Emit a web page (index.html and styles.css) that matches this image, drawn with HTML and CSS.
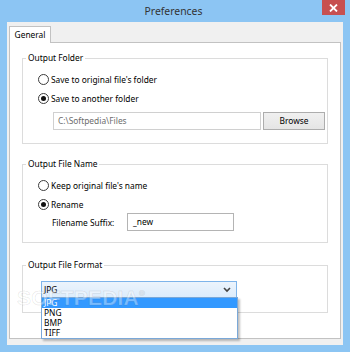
FILE: index.html
```html
<!DOCTYPE html>
<html>
<head>
<meta charset="utf-8">
<title>Preferences</title>
<link rel="stylesheet" href="styles.css">
</head>
<body>
<div class="window">
  <div class="titlebar">
    <span></span>
    <span class="title">Preferences</span>
    <span class="controls">
      <span class="close">
        <svg width="9" height="8" viewBox="0 0 9 8"><path d="M1 0.5 L8 7.5 M8 0.5 L1 7.5" stroke="#fff" stroke-width="1.8"/></svg>
      </span>
    </span>
  </div>
  <div class="client">
    <div class="tabs"><div class="tab">General</div></div>
    <div class="panel">
      <fieldset class="group g1">
        <legend>Output Folder</legend>
        <label class="radio-row"><span class="radio"></span><span>Save to original file's folder</span></label>
        <label class="radio-row r2"><span class="radio checked"></span><span>Save to another folder</span></label>
        <div class="path-row">
          <div class="textbox disabled">C:\Softpedia\Files</div>
          <div class="button">Browse</div>
        </div>
      </fieldset>
      <fieldset class="group g2">
        <legend>Output File Name</legend>
        <label class="radio-row"><span class="radio"></span><span>Keep original file's name</span></label>
        <label class="radio-row r2"><span class="radio checked"></span><span>Rename</span></label>
        <div class="suffix-row">
          <span class="suffix-label">Filename Suffix:</span>
          <div class="textbox suffix">_new</div>
        </div>
      </fieldset>
      <fieldset class="group g3">
        <legend>Output File Format</legend>
        <div class="watermark">SOFTPEDIA<sup>®</sup></div>
        <div class="select-wrap">
          <div class="select">
            <span>JPG</span>
            <svg width="8" height="6" viewBox="0 0 8 6"><path d="M1 1 L4 4 L7 1" fill="none" stroke="#444" stroke-width="1.6"/></svg>
          </div>
          <ul class="dropdown">
            <li class="sel">JPG</li>
            <li>PNG</li>
            <li>BMP</li>
            <li>TIFF</li>
          </ul>
        </div>
      </fieldset>
    </div>
  </div>
</div>
</body>
</html>
```

FILE: styles.css
```css
* { box-sizing: border-box; }
html, body { margin: 0; padding: 0; }
body {
  width: 350px;
  height: 352px;
  overflow: hidden;
  font-family: "Noto Sans", "Liberation Sans", sans-serif;
  font-size: 8.4px;
  color: #000;
}
.window {
  width: 350px;
  height: 352px;
  background: #8cc5f3;
  display: flex;
  flex-direction: column;
}
.titlebar {
  height: 22px;
  display: grid;
  grid-template-columns: 1fr auto 1fr;
  align-items: start;
  padding-right: 5px;
}
.title {
  font-size: 10.4px;
  color: #333;
  line-height: 22px;
  padding-left: 2px;
}
.controls {
  display: flex;
  justify-content: flex-end;
}
.close {
  width: 23px;
  height: 15px;
  background: #c75050;
  display: flex;
  align-items: center;
  justify-content: center;
}
.client {
  flex: 1;
  margin: 0 7px 7px 7px;
  background: #f0f0f0;
  padding: 4px 2px 6px 2px;
  display: flex;
  flex-direction: column;
}
.tabs {
  display: flex;
  height: 16px;
  position: relative;
  z-index: 1;
}
.tab {
  width: 42px;
  height: 17px;
  background: #fff;
  border: 1px solid #c2c2c2;
  border-bottom: none;
  text-align: center;
  line-height: 16px;
}
.panel {
  flex: 1;
  background: #fff;
  border: 1px solid #c2c2c2;
  padding: 8px 12px 0 12px;
  display: flex;
  flex-direction: column;
}
.group {
  margin: 0;
  padding: 0;
  border: 1px solid #dcdcdc;
  min-width: 0;
  position: relative;
}
.group legend {
  margin-left: 3px;
  padding: 0 2px;
  line-height: 14px;
  height: 14px;
}
.g1 { padding-top: 6px; padding-bottom: 13px; }
.g2 { margin-top: 13px; padding-top: 6px; padding-bottom: 11px; }
.g3 { margin-top: 15px; padding-top: 9px; padding-bottom: 14px; }

.radio-row {
  display: flex;
  align-items: center;
  height: 16px;
  padding-left: 15px;
  gap: 2px;
}
.radio-row.r2 { margin-top: 3px; }
.radio {
  width: 11px;
  height: 11px;
  border-radius: 50%;
  border: 1px solid #3c3c3c;
  background: #fff;
  display: flex;
  align-items: center;
  justify-content: center;
}
.radio.checked::after {
  content: "";
  width: 5px;
  height: 5px;
  border-radius: 50%;
  background: #111;
}
.path-row {
  display: flex;
  margin-top: 6px;
  padding-left: 30px;
  gap: 2px;
}
.textbox {
  height: 18px;
  border: 1px solid #c8c8c8;
  background: #fff;
  line-height: 16px;
  padding-left: 4px;
}
.textbox.disabled {
  width: 208px;
  color: #6d6d6d;
  border-color: #d0d0d0;
}
.button {
  width: 62px;
  height: 18px;
  border: 1px solid #adadad;
  background: linear-gradient(#f0f0f0, #e5e5e5);
  text-align: center;
  line-height: 16px;
}
.suffix-row {
  display: flex;
  align-items: center;
  margin-top: 1px;
  padding-left: 29px;
}
.suffix-label { width: 75px; }
.textbox.suffix {
  width: 107px;
  border-color: #b4b4b4;
  padding-left: 5px;
}
.select-wrap {
  margin-left: 18px;
  width: 196px;
  position: relative;
}
.select {
  height: 17px;
  border: 1px solid #7eb4ea;
  background: linear-gradient(#ecf4fc, #dcecfc);
  display: flex;
  align-items: center;
  justify-content: space-between;
  padding: 0 5px 0 2px;
}
.dropdown {
  position: absolute;
  left: 0;
  top: 16px;
  width: 197px;
  margin: 0;
  padding: 0;
  list-style: none;
  background: #fff;
  border: 1px solid #7aa8d8;
  box-shadow: 2px 2px 2px rgba(0,0,0,0.25);
  z-index: 3;
}
.dropdown li {
  height: 10px;
  line-height: 10px;
  padding-left: 2px;
}
.dropdown li.sel {
  background: #3399ff;
  color: #fff;
}
.watermark {
  position: absolute;
  left: -6px;
  top: 10px;
  font-family: "Liberation Sans", sans-serif;
  font-weight: bold;
  font-size: 21px;
  line-height: 24px;
  color: rgba(255,255,255,0.35);
  -webkit-text-stroke: 1px rgba(0,0,0,0.08);
  z-index: 4;
  pointer-events: none;
  letter-spacing: 0.2px;
}
.watermark sup {
  font-size: 8px;
  vertical-align: 9px;
}
```
